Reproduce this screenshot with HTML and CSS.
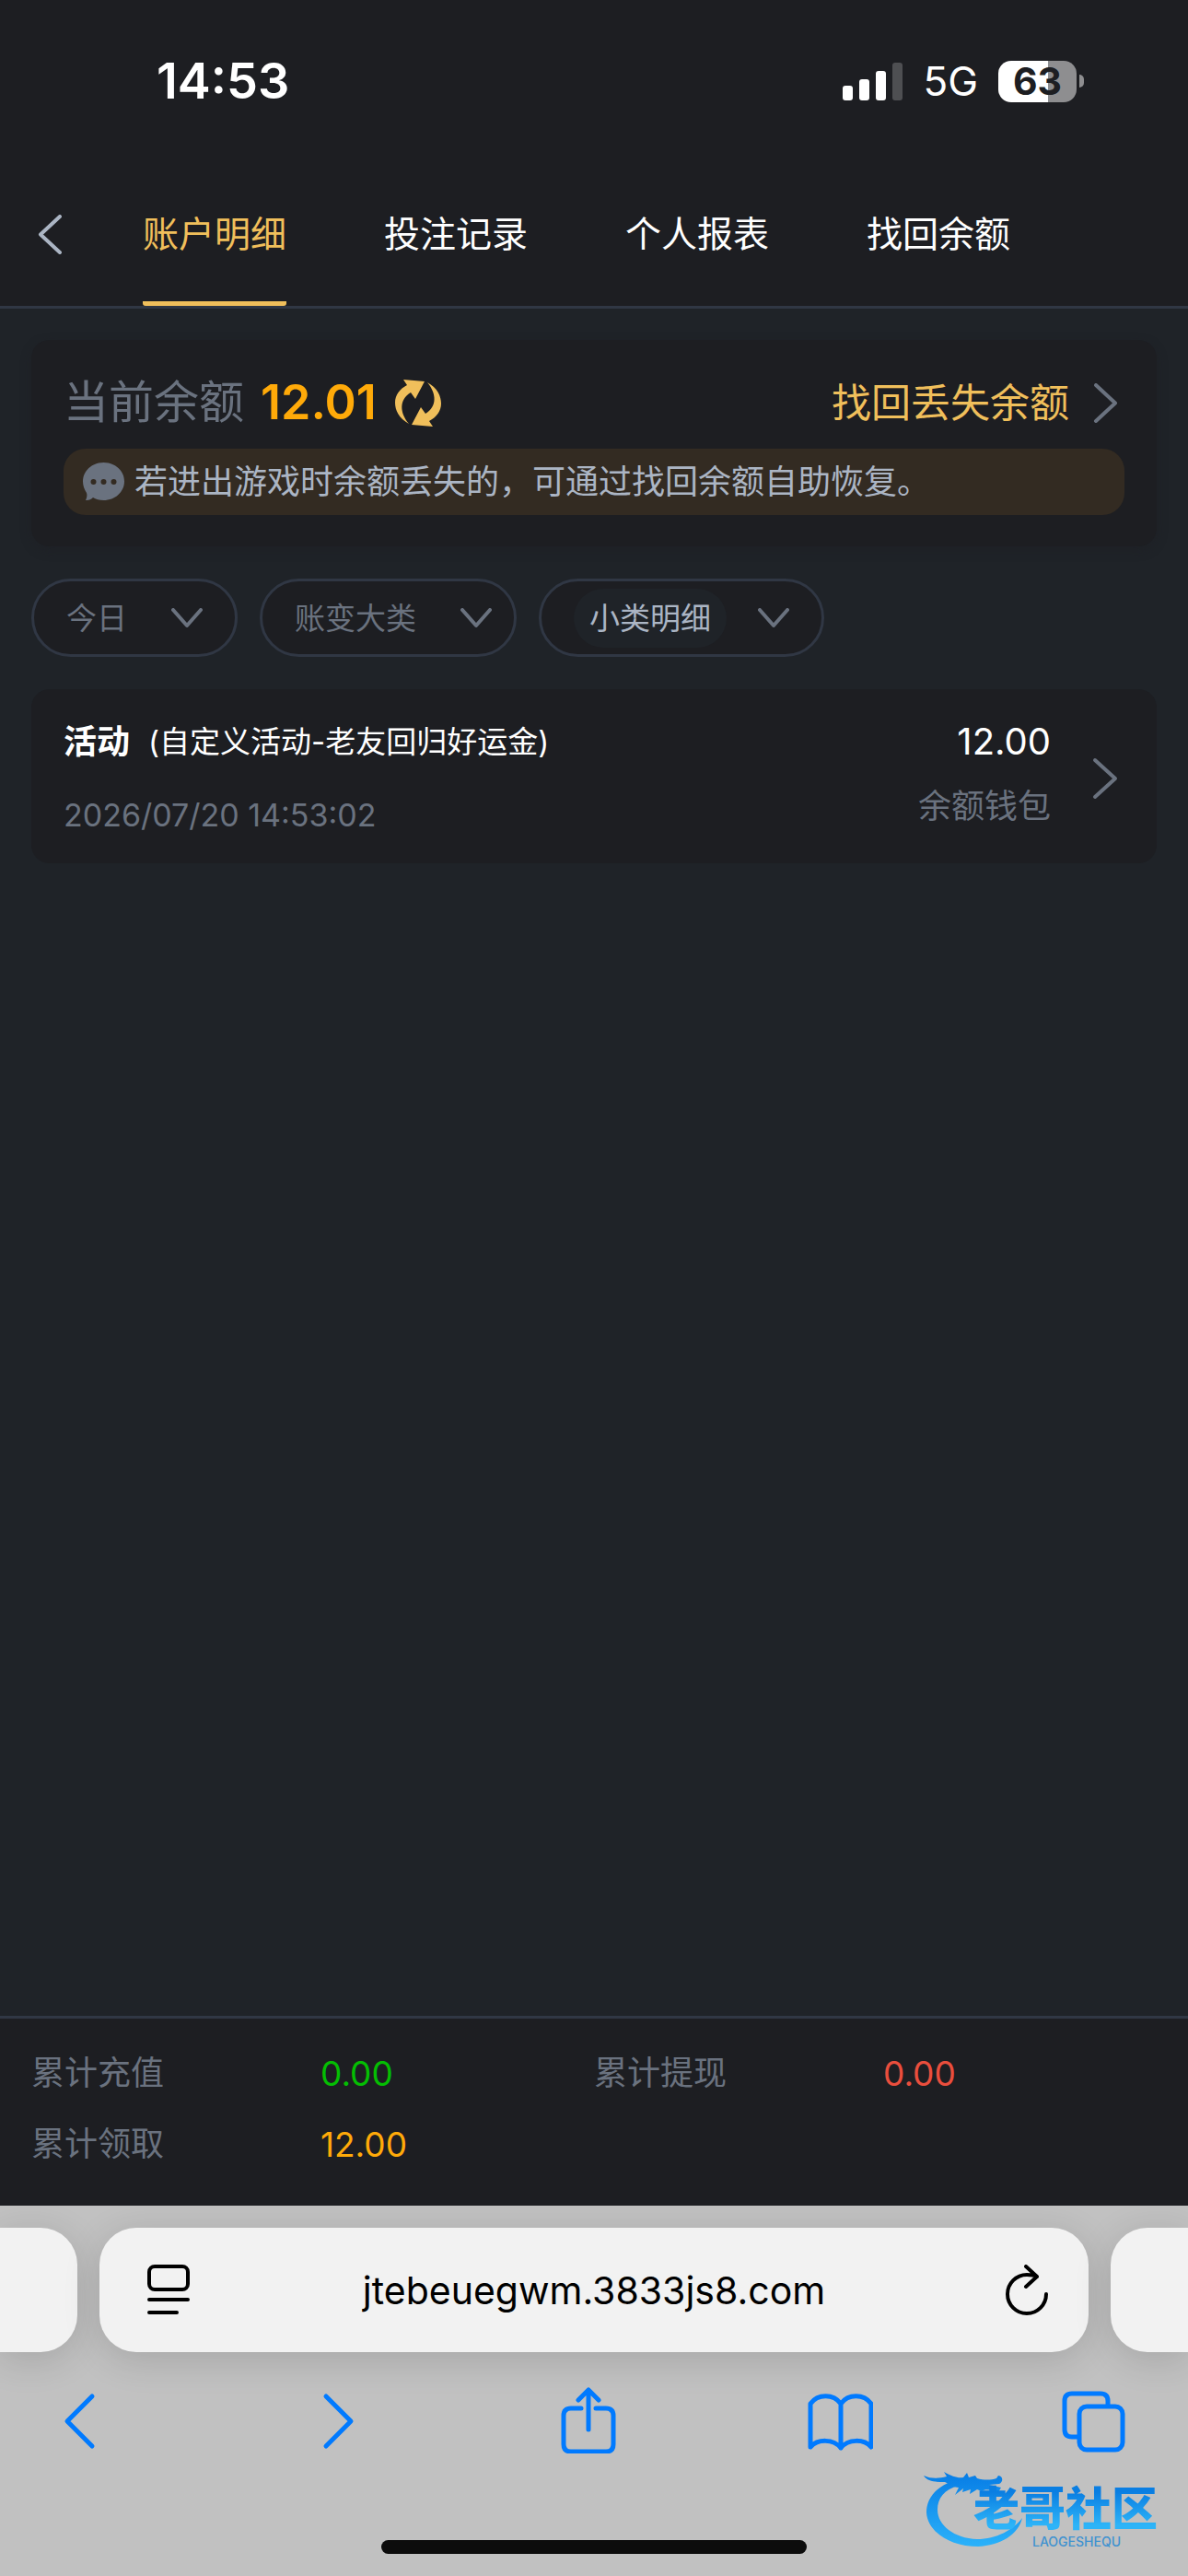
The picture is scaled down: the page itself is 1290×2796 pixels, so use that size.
FILE: index.html
```html
<!DOCTYPE html>
<html lang="zh-CN">
<head>
  <meta charset="UTF-8">
  <meta name="viewport" content="width=device-width, initial-scale=1">
  <title>账户明细</title>
  <link rel="stylesheet" href="styles.css">
</head>
<body>
<div class="status-bar">
  <time class="clock">14:53</time>
  <div class="status-right">
    <svg class="signal" width="65" height="41" viewBox="0 0 65 41">
      <rect x="0" y="25" width="11" height="16" rx="3"/>
      <rect x="18" y="18" width="11" height="23" rx="3"/>
      <rect x="36" y="9" width="11" height="32" rx="3"/>
      <rect x="54" y="0" width="11" height="41" rx="3" opacity=".22"/>
    </svg>
    <span class="network">5G</span>
    <span class="battery">63</span>
  </div>
</div>

<nav class="nav">
  <button class="back" type="button" aria-label="返回">
    <svg width="27" height="43" viewBox="0 0 27 43"><path d="M24 2 3 21.500 24 41"/></svg>
  </button>
  <a class="tab active" href="#">账户明细</a>
  <a class="tab" href="#">投注记录</a>
  <a class="tab" href="#">个人报表</a>
  <a class="tab" href="#">找回余额</a>
</nav>

<main class="main">
  <section class="card balance">
    <div class="balance-row">
      <span class="balance-label">当前余额</span>
      <span class="balance-num">12.01</span>
      <button class="refresh" type="button" aria-label="刷新">
        <svg width="50" height="51" viewBox="0 0 50 51">
          <path id="arc" d="M9 0 32 2 22 21 17 14C4 22 5 36 15 48 4 42 0 33 0 25 0 17 5 10 13 6Z"/>
          <use href="#arc" transform="rotate(180 25 25.500)"/>
        </svg>
      </button>
      <a class="find" href="#">找回丢失余额
        <svg width="27" height="43" viewBox="0 0 27 43"><path d="M3 2 24 21.500 3 41"/></svg>
      </a>
    </div>
    <p class="notice">
      <svg width="45" height="42" viewBox="0 0 45 42">
        <path fill="#6a727f" d="M22.500 0C35 0 45 9 45 20.500S35 41 22.500 41C18 41 14 40 11 38 9 40 6 41.500 3 41 4 39 5 36 4 33 1.500 29 0 25 0 20.500 0 9 10 0 22.500 0Z"/>
        <g fill="#332b22"><circle cx="11.500" cy="21" r="3"/><circle cx="22.500" cy="21" r="3"/><circle cx="33.500" cy="21" r="3"/></g>
      </svg>
      若进出游戏时余额丢失的，可通过找回余额自助恢复。
    </p>
  </section>

  <form class="filters">
    <label class="filter">
      <select aria-label="日期"><option>今日</option></select>
      <svg width="34" height="22" viewBox="0 0 34 22"><path d="M2 2 17 19 32 2"/></svg>
    </label>
    <label class="filter filter-type">
      <select aria-label="账变大类"><option>账变大类</option></select>
      <svg width="34" height="22" viewBox="0 0 34 22"><path d="M2 2 17 19 32 2"/></svg>
    </label>
    <label class="filter filter-sub">
      <select aria-label="小类明细"><option>小类明细</option></select>
      <svg width="34" height="22" viewBox="0 0 34 22"><path d="M2 2 17 19 32 2"/></svg>
    </label>
  </form>

  <a class="card record" href="#">
    <div class="record-info">
      <div class="record-title"><b>活动</b><span>(自定义活动-老友回归好运金)</span></div>
      <time class="record-time">2026/07/20 14:53:02</time>
    </div>
    <div class="record-amount">
      <div class="record-num">12.00</div>
      <div class="record-wallet">余额钱包</div>
    </div>
    <svg width="28" height="46" viewBox="0 0 28 46"><path d="M3 3 25 23 3 43"/></svg>
  </a>
</main>

<dl class="totals">
  <div><dt>累计充值</dt><dd class="green">0.00</dd></div>
  <div><dt>累计提现</dt><dd class="red">0.00</dd></div>
  <div><dt>累计领取</dt><dd class="orange">12.00</dd></div>
</dl>

<footer class="browser">
  <div class="address-row">
    <div class="peek peek-left"></div>
    <div class="address">
      <button type="button" aria-label="页面菜单">
        <svg width="46" height="55" viewBox="0 0 46 55" stroke="#000">
          <rect x="2" y="2" width="42" height="25" rx="6"/>
          <path d="M2 38H44M2 52H32"/>
        </svg>
      </button>
      <span class="url">jtebeuegwm.3833js8.com</span>
      <button type="button" aria-label="重新载入">
        <svg width="46" height="55" viewBox="0 0 46 55" stroke="#000">
          <path d="M34 13C31 11.500 27 11 23 11A21 21 0 1 0 44 32M22 2 34 13 22 24"/>
        </svg>
      </button>
    </div>
    <div class="peek peek-right"></div>
  </div>
  <div class="toolbar">
    <button type="button" aria-label="后退">
      <svg width="72" height="72" viewBox="0 0 72 72"><path d="M49 10 22 37 49 64"/></svg>
    </button>
    <button type="button" aria-label="前进">
      <svg width="72" height="72" viewBox="0 0 72 72"><path d="M28 10 55 37 28 64"/></svg>
    </button>
    <button type="button" aria-label="共享">
      <svg width="72" height="72" viewBox="0 0 72 72">
        <path d="M30 23H19Q11 23 11 31V62Q11 70 19 70H57Q65 70 65 62V31Q65 23 57 23H46M38 46V3M27 14 38 3 49 14"/>
      </svg>
    </button>
    <button type="button" aria-label="书签">
      <svg width="72" height="72" viewBox="0 0 72 72">
        <path d="M37 18C29 7 12 7 4 18V65C12 56 29 56 37 66 45 56 62 56 70 65V18C62 7 45 7 37 18ZM37 18V66"/>
      </svg>
    </button>
    <button type="button" aria-label="标签页">
      <svg width="72" height="72" viewBox="0 0 72 72">
        <rect x="21" y="21" width="47" height="47" rx="8"/>
        <path d="M20 54H13Q5 54 5 46V15Q5 7 13 7H44Q52 7 52 15V20"/>
      </svg>
    </button>
  </div>
  <div class="home-indicator"></div>
  <svg class="logo" width="270" height="92" viewBox="0 0 270 92">
    <defs>
      <linearGradient id="blue" x1="0" y1="10" x2="0" y2="88" gradientUnits="userSpaceOnUse">
        <stop offset="0" stop-color="#087ee6"/>
        <stop offset="1" stop-color="#2bb2fa"/>
      </linearGradient>
      <linearGradient id="blueText" x1="0" y1="0" x2="0" y2="1">
        <stop offset=".2" stop-color="#0a7ee2"/>
        <stop offset=".8" stop-color="#2db4f8"/>
      </linearGradient>
    </defs>
    <g fill="url(#blue)">
      <path d="M34 16C12 23 3 37 3 51 4 72 29 88 59 88 83 87 103 75 107 57 97 70 79 80 58 80 33 79 15 65 15 48 15 36 22 26 38 22Z"/>
      <path d="M0 11C9 15 17 14 25 12L22 7C31 12 37 14 43 13L47 8 49 13 56 11 58 14C65 16 73 16 79 14L81 11C87 12 86 18 82 20L71 21 84 24 81 29C72 26 67 25 63 28L58 26 50 31 51 26 42 29 43 25 34 32 38 24C32 24 27 20 23 18 14 18 4 18 0 11Z"/>
    </g>
    <text class="logo-name" x="54" y="65" fill="url(#blueText)">老哥社区</text>
    <text class="logo-latin" x="118" y="88" fill="#3f92d0">LAOGESHEQU</text>
  </svg>
</footer>
</body>
</html>
```

FILE: styles.css
```css
* {
  box-sizing: border-box;
}
body {
  margin: 0;
  min-height: 100vh;
  display: flex;
  flex-direction: column;
  background: #1f2328;
  color: #fff;
  font-family: Inter, "Noto Sans CJK SC", sans-serif;
  font-size: 36px;
  line-height: 50px;
}
a {
  color: inherit;
  text-decoration: none;
}
button {
  padding: 0;
  border: 0;
  background: none;
  cursor: pointer;
}
svg {
  display: block;
  flex: none;
  fill: none;
  stroke-width: 4px;
  stroke-linecap: round;
  stroke-linejoin: round;
}

/* 状态栏 */
.status-bar {
  height: 176px;
  padding: 0 112px 0 170px;
  display: flex;
  align-items: center;
  justify-content: space-between;
  background: #1d1e22;
}
.clock {
  font-size: 54px;
  font-weight: 600;
}
.status-right {
  display: flex;
  align-items: center;
  gap: 22px;
}
.signal {
  fill: #fff;
}
.network {
  font-size: 44px;
}
.battery {
  position: relative;
  width: 85px;
  height: 45px;
  margin-right: 9px;
  border-radius: 14px;
  background: linear-gradient(90deg, #fff 64%, #8e8e90 64%);
  color: #1d1e22;
  font-size: 41px;
  font-weight: 700;
  line-height: 45px;
  text-align: center;
}
.battery::after {
  content: '';
  position: absolute;
  left: 88px;
  top: 15px;
  width: 5px;
  height: 14px;
  border-radius: 0 5px 5px 0;
  background: #8e8e90;
}

/* 顶部导航 */
.nav {
  height: 159px;
  padding-left: 41px;
  display: flex;
  background: #1d1e22;
  border-bottom: 3px solid #303744;
}
.back {
  width: 114px;
}
.back svg {
  stroke: #abb5c4;
}
.tab {
  margin-right: 106px;
  border-bottom: 5px solid transparent;
  border-radius: 3px;
  font-size: 39px;
  line-height: 156px;
}
.tab.active {
  color: #f0bf5b;
  background: linear-gradient(#f0bf5b, #f0bf5b) bottom / 100% 5px no-repeat border-box;
}

.main {
  flex: 1;
  padding: 34px;
  display: flex;
  flex-direction: column;
  gap: 35px;
}
.card {
  padding: 0 35px;
  border-radius: 20px;
  background: #1d1e22;
}
.card svg,
.filter svg {
  stroke: #6a727f;
}

/* 余额 */
.balance {
  padding-top: 18px;
  padding-bottom: 34px;
  box-shadow: 0 4px 12px rgba(29, 30, 34, .4);
}
.balance-row {
  display: flex;
  align-items: center;
  line-height: 100px;
}
.balance-label {
  margin-right: 18px;
  color: #6a727f;
  font-size: 49px;
}
.balance-num {
  margin-right: 20px;
  color: #ffaa09;
  font-size: 52px;
  font-weight: 600;
}
.balance .refresh svg,
.balance .notice svg {
  stroke: none;
}
.balance .refresh svg {
  fill: #f0bf5b;
}
.find {
  margin-left: auto;
  padding-right: 7px;
  display: flex;
  align-items: center;
  gap: 26px;
  color: #f0bf5b;
  font-size: 43px;
}
.notice {
  margin: 0;
  padding: 11px 21px;
  display: flex;
  align-items: center;
  gap: 11px;
  border-radius: 24px;
  background: #332b22;
  color: #abb5c4;
}

/* 筛选 */
.filters {
  display: flex;
  gap: 24px;
}
.filter {
  height: 85px;
  padding: 0 35px;
  display: flex;
  align-items: center;
  gap: 48px;
  border: 3px solid #303744;
  border-radius: 43px;
  background: #1d1e22;
}
.filter select {
  appearance: none;
  padding: 0;
  border: 0;
  background: none;
  color: #6a727f;
  font: inherit;
  font-size: 33px;
  line-height: 64px;
}
.filter-type {
  padding-right: 24px;
}
.filter-sub {
  gap: 34px;
}
.filter-sub select {
  padding: 0 17px;
  border-radius: 32px;
  background: #1f2328;
  color: #abb5c4;
}

/* 记录 */
.record {
  padding-top: 32px;
  padding-bottom: 27px;
  display: flex;
  align-items: center;
}
.record-info {
  flex: 1;
  display: flex;
  flex-direction: column;
  gap: 30px;
}
.record-title {
  display: flex;
  gap: 20px;
}
.record-title span {
  font-size: 33px;
}
.record-time,
.record-wallet {
  color: #6a727f;
}
.record-time {
  font-size: 34px;
}
.record-amount {
  align-self: flex-start;
  margin-right: 45px;
  display: flex;
  flex-direction: column;
  gap: 20px;
  text-align: right;
}
.record-num {
  font-size: 40px;
}
.record > svg {
  margin-right: 7px;
}

/* 累计 */
.totals {
  margin: 0;
  padding: 21px 34px 28px;
  display: grid;
  grid-template-columns: 1fr 1fr;
  border-top: 3px solid #303744;
  background: #1d1e22;
  line-height: 77px;
}
.totals div {
  display: flex;
}
.totals dt {
  width: 314px;
  color: #6a727f;
}
.totals dd {
  margin: 0;
  font-size: 37px;
}
.green {
  color: #04be02;
}
.red {
  color: #ea4e3d;
}
.orange {
  color: #ffaa09;
}

/* 浏览器底栏 */
.browser {
  position: relative;
  padding: 24px 0;
  background: #c1c1c1;
  color: #000;
}
.address-row {
  display: flex;
  gap: 24px;
  overflow: hidden;
  margin: -24px 0 -60px;
  padding: 24px 0 60px;
}
.peek,
.address {
  height: 135px;
  background: #f2f2f2;
  box-shadow: 0 8px 40px rgba(0, 0, 0, .14);
}
.peek {
  width: 84px;
}
.peek-left {
  border-radius: 0 40px 40px 0;
}
.peek-right {
  border-radius: 40px 0 0 40px;
}
.address {
  flex: 1;
  padding: 0 44px 0 52px;
  display: flex;
  align-items: center;
  border-radius: 40px;
}
.url {
  flex: 1;
  padding-right: 8px;
  font-size: 41px;
  text-align: center;
}
.toolbar {
  position: relative;
  height: 148px;
  padding: 0 67px 0 51px;
  display: flex;
  align-items: center;
  justify-content: space-between;
}
.toolbar svg {
  stroke: #007aff;
  stroke-width: 5px;
}
.home-indicator {
  width: 462px;
  height: 15px;
  margin: 56px auto 0;
  border-radius: 8px;
  background: #0c0c0c;
}
.logo {
  position: absolute;
  right: 17px;
  bottom: 28px;
}
.logo-name {
  font-size: 50px;
  font-weight: 900;
}
.logo-latin {
  font-size: 14px;
  font-weight: 500;
}
```
